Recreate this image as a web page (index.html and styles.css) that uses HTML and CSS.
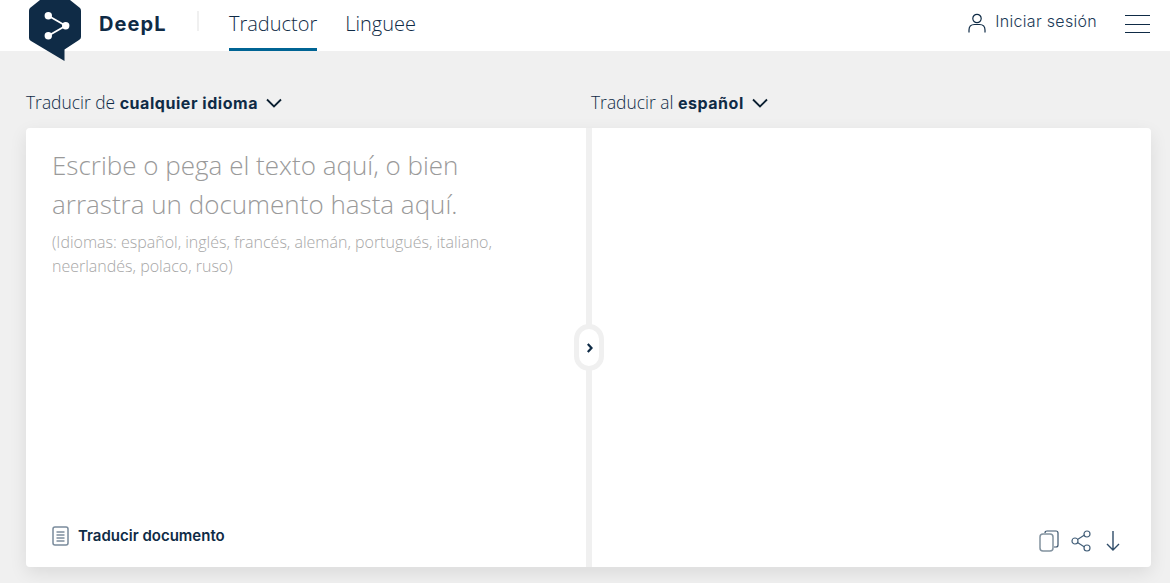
FILE: index.html
```html
<!DOCTYPE html>
<html lang="es">
<head>
<meta charset="utf-8">
<title>DeepL Traductor</title>
<link rel="stylesheet" href="styles.css">
</head>
<body>
<header class="header">
  <div class="brand">
    <svg class="logo" viewBox="0 0 54 62" width="54" height="62" aria-hidden="true">
      <path class="logo-hex" d="M12 0 L42 0 L52 8 Q53 9 53 11 L53 37 Q53 39 51 40 L36.500 49.500 L36.500 61 L3 41 Q1 40 1 38 L1 11 Q1 9 2 8 Z"/>
      <path class="logo-line" d="M20.300 15.700 L37.700 25.700 L20.300 35.700"/>
      <circle class="logo-dot" cx="20.300" cy="15.700" r="3.700"/>
      <circle class="logo-dot" cx="37.700" cy="25.700" r="3.700"/>
      <circle class="logo-dot" cx="20.300" cy="35.700" r="3.700"/>
    </svg>
    <span class="brand-name">DeepL</span>
    <span class="brand-sep"></span>
  </div>
  <nav class="tabs">
    <a class="tab tab-active">Traductor</a>
    <a class="tab">Linguee</a>
  </nav>
  <div class="header-right">
    <a class="login">
      <svg class="user-icon" viewBox="0 0 18 20" width="18" height="20" aria-hidden="true">
        <circle cx="9" cy="5.500" r="4.200"/>
        <path d="M1 19.500 V17 Q1 11.500 6.500 11.500 H11.500 Q17 11.500 17 17 V19.500"/>
      </svg>
      <span>Iniciar sesión</span>
    </a>
    <div class="burger"><i></i><i></i><i></i></div>
  </div>
</header>

<main class="main">
  <div class="labels">
    <div class="label label-left">
      <span>Traducir de <b>cualquier idioma</b></span>
      <svg class="chev" viewBox="0 0 16 10" width="16" height="10" aria-hidden="true"><path d="M1 1.500 L8 8.500 L15 1.500"/></svg>
    </div>
    <div class="label label-right">
      <span>Traducir al <b>español</b></span>
      <svg class="chev" viewBox="0 0 16 10" width="16" height="10" aria-hidden="true"><path d="M1 1.500 L8 8.500 L15 1.500"/></svg>
    </div>
  </div>
  <div class="panels">
    <section class="panel panel-left">
      <div class="placeholder">
        <p class="ph-main">Escribe o pega el texto aquí, o bien<br>arrastra un documento hasta aquí.</p>
        <p class="ph-sub">(Idiomas: español, inglés, francés, alemán, portugués, italiano,<br>neerlandés, polaco, ruso)</p>
      </div>
      <div class="doc">
        <svg class="doc-icon" viewBox="0 0 17 20" width="17" height="20" aria-hidden="true">
          <rect class="doc-frame" x="1" y="1" width="15" height="18" rx="2"/>
          <path class="doc-lines" d="M4.500 6 H12.500 M4.500 9 H12.500 M4.500 12 H12.500 M4.500 15 H12.500"/>
        </svg>
        <span>Traducir documento</span>
      </div>
    </section>
    <section class="panel panel-right">
      <div class="actions">
        <svg class="copy-icon" viewBox="0 0 20 22" width="20" height="22" aria-hidden="true">
          <path class="copy-back" d="M6 3 Q6 1 8 1 H17 Q19 1 19 3 V15 Q19 17 17 17 H15"/>
          <rect class="copy-front" x="1" y="4" width="13" height="17" rx="3"/>
        </svg>
        <svg class="share-icon" viewBox="0 0 21 22" width="21" height="22" aria-hidden="true">
          <path d="M6.500 9.500 L13.500 5 M6.500 12.500 L13.500 17"/>
          <circle cx="4" cy="11" r="3"/>
          <circle cx="16" cy="4" r="3"/>
          <circle cx="16" cy="18" r="3"/>
        </svg>
        <svg class="down-icon" viewBox="0 0 14 22" width="14" height="22" aria-hidden="true">
          <path d="M7 1 V20 M1 14 L7 20 L13 14"/>
        </svg>
      </div>
    </section>
    <div class="swap">
      <svg viewBox="0 0 8 10" width="8" height="10" aria-hidden="true"><path d="M2.800 1 L6.500 5 L2.800 9"/></svg>
    </div>
  </div>
</main>
</body>
</html>
```

FILE: styles.css
```css
* { box-sizing: border-box; }
html, body { margin: 0; padding: 0; }
body {
  width: 1170px;
  height: 583px;
  overflow: hidden;
  background: #f0f0f0;
  font-family: "Open Sans", "Liberation Sans", sans-serif;
  color: #0f2b46;
}

.header {
  height: 51px;
  background: #fff;
  display: flex;
  align-items: flex-start;
  padding-left: 28px;
  position: relative;
  z-index: 2;
}
.brand { display: flex; align-items: flex-start; height: 51px; }
.logo { display: block; flex: none; overflow: visible; }
.logo-hex { fill: #0f2b46; }
.logo-line { fill: none; stroke: #fff; stroke-width: 1.800; }
.logo-dot { fill: #fff; }
.brand-name {
  width: 67px;
  margin-left: 17px;
  margin-top: 10px;
  font: 700 20px/28px Inter, "Open Sans", sans-serif;
  letter-spacing: 1.100px;
}
.brand-sep {
  width: 2px;
  height: 20px;
  margin: 11px 0 0 31px;
  background: #f0f0f0;
}
.tabs { display: flex; gap: 28px; margin-left: 30px; height: 51px; }
.tab {
  font-size: 20px;
  font-weight: 300;
  line-height: 28px;
  padding-top: 10px;
  height: 51px;
  color: #0f2b46;
}
.tab-active { border-bottom: 3px solid #006494; }

.header-right { margin-left: auto; display: flex; align-items: flex-start; }
.login {
  display: flex;
  align-items: flex-start;
  gap: 9px;
  margin-right: 28px;
  padding-top: 11px;
  font: 350 16px/20px Inter, "Open Sans", sans-serif;
  letter-spacing: 0.300px;
  color: #1b3a57;
}
.user-icon { margin-top: 2px; fill: none; stroke: #0f2b46; stroke-width: 1.200; overflow: visible; }
.burger { width: 25px; margin: 15px 20px 0 0; display: flex; flex-direction: column; gap: 7.500px; }
.burger i { display: block; height: 1px; background: #0f2b46; }

.main { padding: 0 19px 0 26px; }
.labels { height: 77px; display: grid; grid-template-columns: 565px 1fr; align-items: start; padding-top: 41px; }
.label {
  display: flex;
  align-items: center;
  gap: 8px;
  font-size: 17.400px;
  font-weight: 300;
  line-height: 21px;
  color: #0f2b46;
}
.label b { font: 700 16px/21px Inter, "Open Sans", sans-serif; letter-spacing: 0.550px; }
.chev { fill: none; stroke: #0b1f30; stroke-width: 1.800; }

.panels {
  position: relative;
  display: grid;
  grid-template-columns: 560px 559px;
  gap: 6px;
  height: 439px;
  background: #f0f0f0;
  border-radius: 4px;
  box-shadow: 0 6px 18px rgba(0, 0, 0, 0.09);
}
.panel {
  position: relative;
  background: #fff;
}
.panel-left {
  border-radius: 4px 0 0 4px;
  display: flex;
  flex-direction: column;
  justify-content: space-between;
  padding: 18px 26px 21px;
}
.panel-right {
  border-radius: 0 4px 4px 0;
  display: flex;
  flex-direction: column;
  justify-content: flex-end;
  padding: 0 31px 15px 0;
}
.placeholder { color: #a7a7a7; }
.ph-main { margin: 0; font-size: 26px; font-weight: 300; line-height: 39px; white-space: nowrap; color: #9a9a9a; }
.ph-sub { margin: 6px 0 0; font-size: 16px; font-weight: 300; line-height: 24px; white-space: nowrap; }

.doc {
  display: flex;
  align-items: center;
  gap: 9px;
  font: 600 15px/20px Inter, "Open Sans", sans-serif;
  color: #0f2b46;
}
.doc-icon { flex: none; }
.doc-frame { fill: none; stroke: #7a8b9c; stroke-width: 1.500; }
.doc-lines { fill: none; stroke: #3c556d; stroke-width: 1; }

.actions { display: flex; justify-content: flex-end; align-items: center; gap: 12px; }
.copy-icon { fill: none; }
.copy-back { fill: none; stroke: #3c556d; stroke-width: 1.200; }
.copy-front { fill: #fff; stroke: #82929f; stroke-width: 1.500; }
.share-icon { fill: none; stroke: #44607a; stroke-width: 1.200; }
.down-icon { margin-left: 2px; fill: none; stroke: #2f4c68; stroke-width: 1.400; }

.swap {
  position: absolute;
  left: 548px;
  top: 196px;
  width: 30px;
  height: 47px;
  border: 5px solid #f0f0f0;
  border-radius: 15px;
  background: #fff;
  display: flex;
  align-items: center;
  justify-content: center;
}
.swap svg { fill: none; stroke: #0f2b46; stroke-width: 2.200; }
```
